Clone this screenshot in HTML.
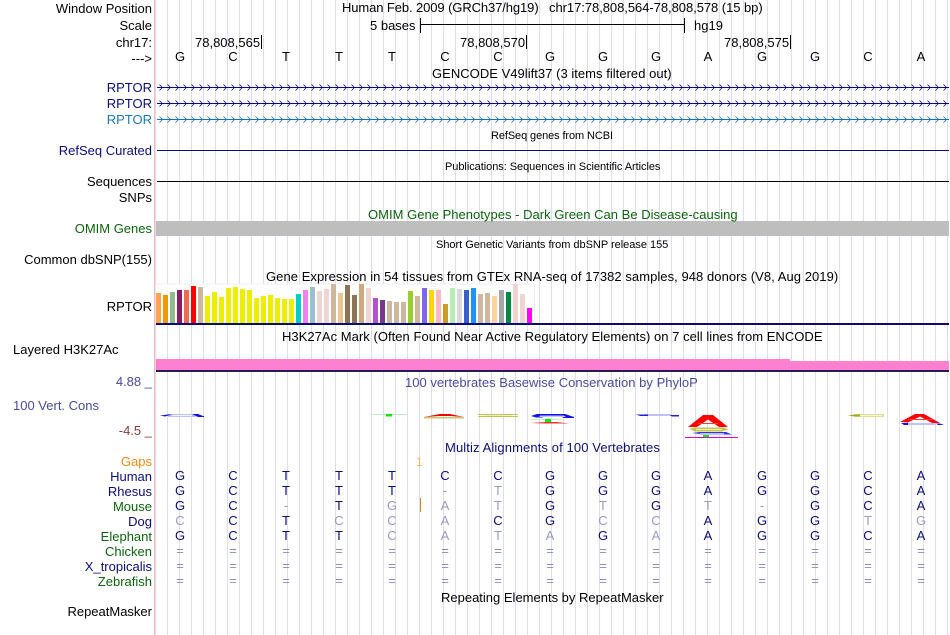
<!DOCTYPE html>
<html><head><meta charset="utf-8">
<style>
html,body{margin:0;padding:0;background:#fff}
#p{position:relative;width:950px;height:635px;overflow:hidden;background:#fff;font-family:"Liberation Sans",sans-serif;font-size:13px;color:#000}
#g{position:absolute;left:0;top:0;width:950px;height:635px}
.t,.r,.b{position:absolute;white-space:nowrap;line-height:14px;height:14px}
.t,.r{margin-top:1px}
.r{right:798px;text-align:right}
.s{font-size:11px;margin-top:0}
.n{color:#0c0c78}.m{color:#0c640c}.v{color:#4a4a9c}
i{font-style:normal;position:absolute;top:0;width:20px;text-align:center;margin-left:-10px}
.b{left:0;width:950px}
i.l{color:#9a9ac4}
.q i{color:#8a8abc}
</style></head><body><div id="p">
<svg id="g" width="950" height="635" xmlns="http://www.w3.org/2000/svg" shape-rendering="crispEdges">
<defs>
<pattern id="gr" x="167" y="0" width="12" height="10" patternUnits="userSpaceOnUse"><rect x="0" y="0" width="1" height="10" fill="#dcdcf4"/></pattern>
<pattern id="c1" x="157" y="84" width="8" height="7" patternUnits="userSpaceOnUse"><path d="M2.500 0.500L5.500 3.500L2.500 6.500" fill="none" stroke="#0c0c78" stroke-width=".8" shape-rendering="auto"/></pattern>
<pattern id="c2" x="157" y="100" width="8" height="7" patternUnits="userSpaceOnUse"><path d="M2.500 0.500L5.500 3.500L2.500 6.500" fill="none" stroke="#0c0c78" stroke-width=".8" shape-rendering="auto"/></pattern>
<pattern id="c3" x="157" y="116" width="8" height="7" patternUnits="userSpaceOnUse"><path d="M2.500 0.500L5.500 3.500L2.500 6.500" fill="none" stroke="#1a70a8" stroke-width=".8" shape-rendering="auto"/></pattern>
</defs>
<rect x="155" y="0" width="795" height="635" fill="url(#gr)"/>
<rect x="154" y="0" width="1" height="635" fill="#ffb4b4"/>
<!-- scale + ticks -->
<rect x="421" y="24" width="264" height="1" fill="#000"/>
<rect x="420" y="18" width="1" height="15" fill="#000"/>
<rect x="684" y="18" width="1" height="15" fill="#000"/>
<rect x="261" y="35" width="1" height="14" fill="#000"/>
<rect x="526" y="35" width="1" height="14" fill="#000"/>
<rect x="790" y="35" width="1" height="14" fill="#000"/>
<!-- genes -->
<rect x="157" y="87" width="792" height="1" fill="#0c0c78"/><rect x="157" y="84" width="792" height="7" fill="url(#c1)"/>
<rect x="157" y="103" width="792" height="1" fill="#0c0c78"/><rect x="157" y="100" width="792" height="7" fill="url(#c2)"/>
<rect x="157" y="119" width="792" height="1" fill="#1a70a8"/><rect x="157" y="116" width="792" height="7" fill="url(#c3)"/>
<rect x="157" y="150" width="792" height="1" fill="#0c0c78"/>
<rect x="157" y="181" width="792" height="1" fill="#000"/>
<rect x="156" y="221" width="793" height="15" fill="#bebebe"/>
<!-- GTEx -->
<rect x="155" y="284" width="380" height="39" fill="#fff"/>
<rect x="155.500" y="284" width="379" height="39" fill="none" stroke="#ececf2"/>
<g>
<rect x="156" y="293" width="5" height="30" fill="#ffa54f"/><rect x="163" y="295" width="5" height="28" fill="#ee9a00"/><rect x="170" y="292" width="5" height="31" fill="#8fbc8f"/><rect x="177" y="290" width="5" height="33" fill="#8b1c62"/><rect x="184" y="290" width="5" height="33" fill="#ee6a50"/><rect x="191" y="286" width="5" height="37" fill="#ff0000"/><rect x="198" y="287" width="5" height="36" fill="#cdb79e"/>
<g fill="#eeee00"><rect x="205" y="296" width="5" height="27"/><rect x="212" y="292" width="5" height="31"/><rect x="219" y="297" width="5" height="26"/><rect x="226" y="288" width="5" height="35"/><rect x="233" y="287" width="5" height="36"/><rect x="240" y="289" width="5" height="34"/><rect x="247" y="290" width="5" height="33"/><rect x="254" y="298" width="5" height="25"/><rect x="261" y="296" width="5" height="27"/><rect x="268" y="295" width="5" height="28"/><rect x="275" y="298" width="5" height="25"/><rect x="282" y="299" width="5" height="24"/><rect x="289" y="299" width="5" height="24"/></g>
<rect x="296" y="294" width="5" height="29" fill="#00cdcd"/><rect x="303" y="290" width="5" height="33" fill="#ee82ee"/><rect x="310" y="287" width="5" height="36" fill="#9ac0cd"/><rect x="317" y="291" width="5" height="32" fill="#eed5d2"/><rect x="324" y="289" width="5" height="34" fill="#eed5d2"/><rect x="331" y="284" width="5" height="39" fill="#cdb79e"/><rect x="338" y="293" width="5" height="30" fill="#eec591"/><rect x="345" y="285" width="5" height="38" fill="#8b7355"/><rect x="352" y="295" width="5" height="28" fill="#8b7355"/><rect x="359" y="284" width="5" height="39" fill="#cdaa7d"/><rect x="366" y="288" width="5" height="35" fill="#eed5d2"/><rect x="373" y="298" width="5" height="25" fill="#b452cd"/><rect x="380" y="300" width="5" height="23" fill="#7a378b"/><rect x="387" y="301" width="5" height="22" fill="#cdb79e"/><rect x="394" y="302" width="5" height="21" fill="#cdb79e"/><rect x="401" y="302" width="5" height="21" fill="#cdb79e"/><rect x="408" y="291" width="5" height="32" fill="#9acd32"/><rect x="415" y="296" width="5" height="27" fill="#cdb79e"/><rect x="422" y="288" width="5" height="35" fill="#7a67ee"/><rect x="429" y="290" width="5" height="33" fill="#ffd700"/><rect x="436" y="290" width="5" height="33" fill="#ffb6c1"/><rect x="443" y="304" width="5" height="19" fill="#cd9b1d"/><rect x="450" y="288" width="5" height="35" fill="#b4eeb4"/><rect x="457" y="289" width="5" height="34" fill="#d9d9d9"/><rect x="464" y="290" width="5" height="33" fill="#3a5fcd"/><rect x="471" y="288" width="5" height="35" fill="#1e90ff"/><rect x="478" y="294" width="5" height="29" fill="#cdb79e"/><rect x="485" y="293" width="5" height="30" fill="#cdb79e"/><rect x="492" y="296" width="5" height="27" fill="#ffd39b"/><rect x="499" y="290" width="5" height="33" fill="#a6a6a6"/><rect x="506" y="292" width="5" height="31" fill="#008b45"/><rect x="513" y="284" width="5" height="39" fill="#eed5d2"/><rect x="520" y="294" width="5" height="29" fill="#eed5d2"/><rect x="527" y="308" width="5" height="15" fill="#ff00ff"/>
</g>
<rect x="156" y="323" width="793" height="2" fill="#0c0c78"/>
<!-- H3K27Ac -->
<rect x="156" y="359" width="634" height="11" fill="#ff80d0"/>
<rect x="790" y="361" width="159" height="9" fill="#ff80d0"/>
<rect x="156" y="370" width="793" height="2" fill="#2a1a55"/>
<!-- Conservation logos -->
<g shape-rendering="auto">
<rect x="168" y="414" width="28" height="3" fill="#c0c0f8"/><rect x="172" y="415" width="20" height="1" fill="#f0f0ff"/>
<path d="M160 415.500L168 414.500H172L165 416.500Z M192 414H198L203 416H204V417H198Z" fill="#1010e8"/>
<rect x="370" y="414" width="37" height="1" fill="#c4f0c4"/><rect x="386" y="414" width="6" height="2.500" fill="#00f000"/>
<path d="M424 417L440 414H450L464 417L450 416H440Z" fill="#f00000"/><rect x="424" y="417" width="40" height="1.500" fill="#c8c860"/>
<rect x="478" y="414" width="40" height="1" fill="#c4c450"/><rect x="478" y="416" width="40" height="1" fill="#c4c450"/><rect x="484" y="415" width="28" height="1" fill="#f0f0c8"/>
<path d="M531 416L537 414H565L574 417V418H562L566 416H538L544 417.500H536Z" fill="#1010f0"/><rect x="540" y="415.500" width="24" height="1.500" fill="#c8c8f8"/>
<rect x="530" y="419" width="32" height="1" fill="#c4f0c4"/><rect x="545" y="419" width="6" height="3" fill="#00f000"/>
<path d="M530 423L545 422H557L569 423.500L555 423.500H545Z" fill="#f03030"/>
<rect x="645" y="414" width="27" height="2" fill="#c0c0f4"/><path d="M636 414.500H648V416H640Z M670 415H679V416.500H672Z" fill="#2020e0"/>
<path d="M688 427L703 415H713L728 427H719L708 419.500L697 427Z" fill="#ff0000"/><rect x="698" y="423" width="20" height="1" fill="#f04040"/>
<path d="M689 429L695 427.500H722L729 429L722 431.500H695Z" fill="#c4c44c"/><rect x="696" y="429" width="26" height="1" fill="#eeeec0"/>
<path d="M692 433L700 432H726L732 434.500H722L700 434Z" fill="#3030f0"/><rect x="700" y="433" width="24" height="2" fill="#c0c0f8"/>
<rect x="703" y="435" width="6" height="2" fill="#00f000"/>
<rect x="685" y="437" width="53" height="1" fill="#e000c8"/>
<rect x="855" y="414" width="29" height="3" fill="#e0e090"/><rect x="858" y="415" width="24" height="1" fill="#f4f4d8"/>
<path d="M848 415.500L854 414.500H860V416.500H854Z" fill="#a8a820"/>
<path d="M900 422L915 414H924L940 423H932L920 416.500L908 422.500Z" fill="#ff0000"/><rect x="908" y="419" width="24" height="1" fill="#f04040"/>
<path d="M901 423H908V425H904Z M936 423.500H940L944 425H938Z" fill="#1010f0"/><rect x="908" y="423" width="28" height="2" fill="#c0c0f8"/>
</g>
<!-- gaps tick -->
<rect x="420" y="498" width="1" height="14" fill="#e08010"/>
</svg>

<div class="r" style="top:1px">Window Position</div>
<div class="r" style="top:18px">Scale</div>
<div class="r" style="top:35px">chr17:</div>
<div class="r" style="top:51px">---&gt;</div>
<div class="r n" style="top:80px">RPTOR</div>
<div class="r n" style="top:96px">RPTOR</div>
<div class="r" style="top:112px;color:#1a78b8">RPTOR</div>
<div class="r n" style="top:143px">RefSeq Curated</div>
<div class="r" style="top:174px">Sequences</div>
<div class="r" style="top:190px">SNPs</div>
<div class="r m" style="top:221px">OMIM Genes</div>
<div class="r" style="top:252px">Common dbSNP(155)</div>
<div class="r" style="top:299px">RPTOR</div>
<div class="t" style="left:13px;top:342px">Layered H3K27Ac</div>
<div class="r v" style="top:374px">4.88 _</div>
<div class="t v" style="left:13px;top:398px">100 Vert. Cons</div>
<div class="r" style="top:423px;color:#8b3a3a">-4.5 _</div>
<div class="r" style="top:454px;color:#f08a10">Gaps</div>
<div class="r n" style="top:469px">Human</div>
<div class="r n" style="top:484px">Rhesus</div>
<div class="r m" style="top:499px">Mouse</div>
<div class="r n" style="top:514px">Dog</div>
<div class="r m" style="top:529px">Elephant</div>
<div class="r m" style="top:544px">Chicken</div>
<div class="r n" style="top:559px">X_tropicalis</div>
<div class="r m" style="top:574px">Zebrafish</div>
<div class="r" style="top:604px">RepeatMasker</div>

<div class="t" style="left:342px;top:0;letter-spacing:-.1px">Human Feb. 2009 (GRCh37/hg19)</div>
<div class="t" style="left:549px;top:0;letter-spacing:-.05px">chr17:78,808,564-78,808,578 (15 bp)</div>
<div class="t" style="left:370px;top:18px">5 bases</div>
<div class="t" style="left:694px;top:18px">hg19</div>
<div class="t" style="left:195px;top:35px">78,808,565</div>
<div class="t" style="left:460px;top:35px">78,808,570</div>
<div class="t" style="left:724px;top:35px">78,808,575</div>

<div class="b" style="top:50px"><i style="left:180px">G</i><i style="left:233px">C</i><i style="left:286px">T</i><i style="left:339px">T</i><i style="left:392px">T</i><i style="left:445px">C</i><i style="left:498px">C</i><i style="left:550px">G</i><i style="left:603px">G</i><i style="left:656px">G</i><i style="left:708px">A</i><i style="left:762px">G</i><i style="left:815px">G</i><i style="left:868px">C</i><i style="left:921px">A</i></div>

<div class="t" style="left:432px;top:66px;letter-spacing:.03px">GENCODE V49lift37 (3 items filtered out)</div>
<div class="t s" style="left:491px;top:129px;letter-spacing:-.1px">RefSeq genes from NCBI</div>
<div class="t s" style="left:445px;top:160px;letter-spacing:-.05px">Publications: Sequences in Scientific Articles</div>
<div class="t m" style="left:368px;top:207px;letter-spacing:.02px">OMIM Gene Phenotypes - Dark Green Can Be Disease-causing</div>
<div class="t s" style="left:436px;top:238px;letter-spacing:-.02px">Short Genetic Variants from dbSNP release 155</div>
<div class="t" style="left:266px;top:269px;letter-spacing:.055px">Gene Expression in 54 tissues from GTEx RNA-seq of 17382 samples, 948 donors (V8, Aug 2019)</div>
<div class="t" style="left:282px;top:329px;letter-spacing:.035px">H3K27Ac Mark (Often Found Near Active Regulatory Elements) on 7 cell lines from ENCODE</div>
<div class="t v" style="left:405px;top:375px;letter-spacing:.02px">100 vertebrates Basewise Conservation by PhyloP</div>
<div class="t n" style="left:445px;top:440px;letter-spacing:.11px">Multiz Alignments of 100 Vertebrates</div>
<div class="t" style="left:416px;top:454px;color:#f4b060;font-size:12px">1</div>
<div class="t" style="left:441px;top:590px">Repeating Elements by RepeatMasker</div>

<div class="b n" style="top:469px"><i style="left:180px">G</i><i style="left:233px">C</i><i style="left:286px">T</i><i style="left:339px">T</i><i style="left:392px">T</i><i style="left:445px">C</i><i style="left:498px">C</i><i style="left:550px">G</i><i style="left:603px">G</i><i style="left:656px">G</i><i style="left:708px">A</i><i style="left:762px">G</i><i style="left:815px">G</i><i style="left:868px">C</i><i style="left:921px">A</i></div>
<div class="b n" style="top:484px"><i style="left:180px">G</i><i style="left:233px">C</i><i style="left:286px">T</i><i style="left:339px">T</i><i style="left:392px">T</i><i class="l" style="left:445px">-</i><i class="l" style="left:498px">T</i><i style="left:550px">G</i><i style="left:603px">G</i><i style="left:656px">G</i><i style="left:708px">A</i><i style="left:762px">G</i><i style="left:815px">G</i><i style="left:868px">C</i><i style="left:921px">A</i></div>
<div class="b n" style="top:499px"><i style="left:180px">G</i><i style="left:233px">C</i><i class="l" style="left:286px">-</i><i style="left:339px">T</i><i class="l" style="left:392px">G</i><i class="l" style="left:445px">A</i><i class="l" style="left:498px">T</i><i style="left:550px">G</i><i class="l" style="left:603px">T</i><i style="left:656px">G</i><i class="l" style="left:708px">T</i><i class="l" style="left:762px">-</i><i style="left:815px">G</i><i style="left:868px">C</i><i style="left:921px">A</i></div>
<div class="b n" style="top:514px"><i class="l" style="left:180px">C</i><i style="left:233px">C</i><i style="left:286px">T</i><i class="l" style="left:339px">C</i><i class="l" style="left:392px">C</i><i class="l" style="left:445px">A</i><i style="left:498px">C</i><i style="left:550px">G</i><i class="l" style="left:603px">C</i><i class="l" style="left:656px">C</i><i style="left:708px">A</i><i style="left:762px">G</i><i style="left:815px">G</i><i class="l" style="left:868px">T</i><i class="l" style="left:921px">G</i></div>
<div class="b n" style="top:529px"><i style="left:180px">G</i><i style="left:233px">C</i><i style="left:286px">T</i><i style="left:339px">T</i><i class="l" style="left:392px">C</i><i class="l" style="left:445px">A</i><i class="l" style="left:498px">T</i><i class="l" style="left:550px">A</i><i style="left:603px">G</i><i class="l" style="left:656px">A</i><i style="left:708px">A</i><i style="left:762px">G</i><i style="left:815px">G</i><i style="left:868px">C</i><i style="left:921px">A</i></div>
<div class="b q" style="top:544px"><i style="left:180px">=</i><i style="left:233px">=</i><i style="left:286px">=</i><i style="left:339px">=</i><i style="left:392px">=</i><i style="left:445px">=</i><i style="left:498px">=</i><i style="left:550px">=</i><i style="left:603px">=</i><i style="left:656px">=</i><i style="left:708px">=</i><i style="left:762px">=</i><i style="left:815px">=</i><i style="left:868px">=</i><i style="left:921px">=</i></div>
<div class="b q" style="top:559px"><i style="left:180px">=</i><i style="left:233px">=</i><i style="left:286px">=</i><i style="left:339px">=</i><i style="left:392px">=</i><i style="left:445px">=</i><i style="left:498px">=</i><i style="left:550px">=</i><i style="left:603px">=</i><i style="left:656px">=</i><i style="left:708px">=</i><i style="left:762px">=</i><i style="left:815px">=</i><i style="left:868px">=</i><i style="left:921px">=</i></div>
<div class="b q" style="top:574px"><i style="left:180px">=</i><i style="left:233px">=</i><i style="left:286px">=</i><i style="left:339px">=</i><i style="left:392px">=</i><i style="left:445px">=</i><i style="left:498px">=</i><i style="left:550px">=</i><i style="left:603px">=</i><i style="left:656px">=</i><i style="left:708px">=</i><i style="left:762px">=</i><i style="left:815px">=</i><i style="left:868px">=</i><i style="left:921px">=</i></div>
</div></body></html>
